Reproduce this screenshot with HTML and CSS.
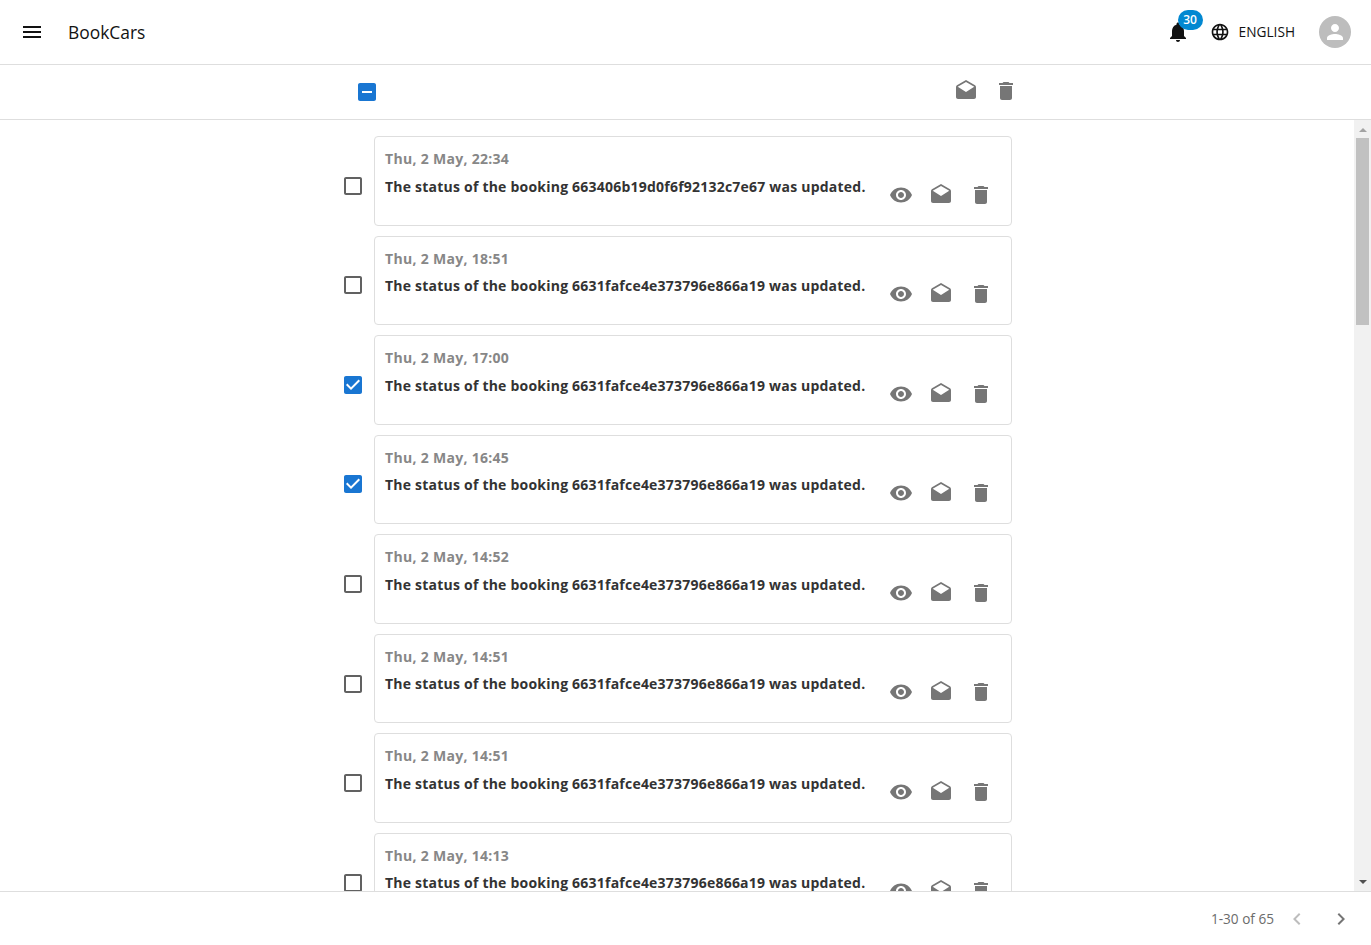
FILE: index.html
```html
<!DOCTYPE html>
<html lang="en">
  <head>
    <meta charset="UTF-8" />
    <meta name="viewport" content="width=device-width, initial-scale=1.0" />
    <title>BookCars</title>
    <link rel="stylesheet" href="styles.css">
  </head>
  <body>
    <svg class="sprite" xmlns="http://www.w3.org/2000/svg">
      <symbol id="i-menu" viewBox="0 0 24 24"><path d="M3 18h18v-2H3v2zm0-5h18v-2H3v2zm0-7v2h18V6H3z"/></symbol>
      <symbol id="i-bell" viewBox="0 0 24 24"><path d="M12 22c1.1 0 2-.9 2-2h-4c0 1.1.89 2 2 2zm6-6v-5c0-3.07-1.64-5.64-4.5-6.32V4c0-.83-.67-1.5-1.5-1.5s-1.5.67-1.5 1.5v.68C7.63 5.36 6 7.92 6 11v5l-2 2v1h16v-1l-2-2z"/></symbol>
      <symbol id="i-globe" viewBox="0 0 24 24"><path d="M11.99 2C6.47 2 2 6.48 2 12s4.47 10 9.99 10C17.52 22 22 17.52 22 12S17.52 2 11.99 2zm6.93 6h-2.95c-.32-1.25-.78-2.45-1.38-3.56 1.84.63 3.37 1.91 4.33 3.56zM12 4.04c.83 1.2 1.48 2.53 1.91 3.96h-3.82c.43-1.43 1.08-2.76 1.91-3.96zM4.26 14C4.1 13.36 4 12.69 4 12s.1-1.36.26-2h3.38c-.08.66-.14 1.32-.14 2 0 .68.06 1.34.14 2H4.26zm.82 2h2.95c.32 1.25.78 2.45 1.38 3.56-1.84-.63-3.37-1.9-4.33-3.56zm2.95-8H5.08c.96-1.66 2.49-2.93 4.33-3.56C8.81 5.55 8.35 6.75 8.03 8zM12 19.96c-.83-1.2-1.48-2.53-1.91-3.96h3.82c-.43 1.43-1.08 2.76-1.91 3.96zM14.34 14H9.66c-.09-.66-.16-1.32-.16-2 0-.68.07-1.35.16-2h4.68c.09.65.16 1.32.16 2 0 .68-.07 1.34-.16 2zm.25 5.56c.6-1.11 1.06-2.31 1.38-3.56h2.95c-.96 1.65-2.49 2.93-4.33 3.56zM16.36 14c.08-.66.14-1.32.14-2 0-.68-.06-1.34-.14-2h3.38c.16.64.26 1.31.26 2s-.1 1.36-.26 2h-3.38z"/></symbol>
      <symbol id="i-person" viewBox="0 0 24 24"><path d="M12 12c2.21 0 4-1.79 4-4s-1.79-4-4-4-4 1.79-4 4 1.79 4 4 4zm0 2c-2.67 0-8 1.34-8 4v2h16v-2c0-2.66-5.33-4-8-4z"/></symbol>
      <symbol id="i-eye" viewBox="0 0 24 24"><path d="M12 4.5C7 4.5 2.73 7.61 1 12c1.73 4.39 6 7.5 11 7.5s9.27-3.11 11-7.5c-1.73-4.39-6-7.5-11-7.5zM12 17c-2.76 0-5-2.24-5-5s2.24-5 5-5 5 2.24 5 5-2.24 5-5 5zm0-8c-1.66 0-3 1.34-3 3s1.34 3 3 3 3-1.34 3-3-1.34-3-3-3z"/></symbol>
      <symbol id="i-drafts" viewBox="0 0 24 24"><path d="M21.99 8c0-.72-.37-1.35-.94-1.7L12 1 2.95 6.3C2.38 6.65 2 7.28 2 8v10c0 1.1.9 2 2 2h16c1.1 0 2-.9 2-2l-.01-10zM12 13 3.74 7.84 12 3l8.26 4.84L12 13z"/></symbol>
      <symbol id="i-trash" viewBox="0 0 24 24"><path d="M6 19c0 1.1.9 2 2 2h8c1.1 0 2-.9 2-2V7H6v12zM19 4h-3.5l-1-1h-5l-1 1H5v2h14V4z"/></symbol>
      <symbol id="i-box" viewBox="0 0 24 24"><path d="M19 5v14H5V5h14m0-2H5c-1.1 0-2 .9-2 2v14c0 1.1.9 2 2 2h14c1.1 0 2-.9 2-2V5c0-1.1-.9-2-2-2z"/></symbol>
      <symbol id="i-checked" viewBox="0 0 24 24"><path d="M19 3H5c-1.11 0-2 .9-2 2v14c0 1.1.89 2 2 2h14c1.11 0 2-.9 2-2V5c0-1.1-.89-2-2-2zm-9 14l-5-5 1.41-1.41L10 14.17l7.59-7.59L19 8l-9 9z"/></symbol>
      <symbol id="i-partial" viewBox="0 0 24 24"><path d="M19 3H5c-1.1 0-2 .9-2 2v14c0 1.1.9 2 2 2h14c1.1 0 2-.9 2-2V5c0-1.1-.9-2-2-2zm-2 10H7v-2h10v2z"/></symbol>
      <symbol id="i-prev" viewBox="0 0 24 24"><path d="M15.41 7.41 14 6l-6 6 6 6 1.41-1.41L10.83 12z"/></symbol>
      <symbol id="i-next" viewBox="0 0 24 24"><path d="M10 6 8.59 7.41 13.17 12l-4.58 4.59L10 18l6-6z"/></symbol>
    </svg>

    <header class="topbar">
      <svg class="icon menu-icon"><use href="#i-menu"/></svg>
      <div class="brand">BookCars</div>
      <div class="topbar-right">
        <div class="bell">
          <svg class="icon"><use href="#i-bell"/></svg>
          <span class="badge">30</span>
        </div>
        <svg class="icon globe"><use href="#i-globe"/></svg>
        <span class="lang">ENGLISH</span>
        <div class="avatar"><svg class="icon person"><use href="#i-person"/></svg></div>
      </div>
    </header>

    <div class="toolbar">
      <svg class="icon check-on"><use href="#i-partial"/></svg>
      <div class="toolbar-actions">
        <span class="btn"><svg class="icon"><use href="#i-drafts"/></svg></span>
        <span class="btn"><svg class="icon"><use href="#i-trash"/></svg></span>
      </div>
    </div>

    <main class="content">
      <div class="list">
        <div class="row">
          <svg class="icon check"><use href="#i-box"/></svg>
          <div class="card">
            <div class="card-text">
              <div class="date">Thu, 2 May, 22:34</div>
              <div class="message">The status of the booking 663406b19d0f6f92132c7e67 was updated.</div>
            </div>
            <div class="actions">
              <span class="btn"><svg class="icon"><use href="#i-eye"/></svg></span>
              <span class="btn"><svg class="icon"><use href="#i-drafts"/></svg></span>
              <span class="btn"><svg class="icon"><use href="#i-trash"/></svg></span>
            </div>
          </div>
        </div>
        <div class="row">
          <svg class="icon check"><use href="#i-box"/></svg>
          <div class="card">
            <div class="card-text">
              <div class="date">Thu, 2 May, 18:51</div>
              <div class="message">The status of the booking 6631fafce4e373796e866a19 was updated.</div>
            </div>
            <div class="actions">
              <span class="btn"><svg class="icon"><use href="#i-eye"/></svg></span>
              <span class="btn"><svg class="icon"><use href="#i-drafts"/></svg></span>
              <span class="btn"><svg class="icon"><use href="#i-trash"/></svg></span>
            </div>
          </div>
        </div>
        <div class="row">
          <svg class="icon check-on"><use href="#i-checked"/></svg>
          <div class="card">
            <div class="card-text">
              <div class="date">Thu, 2 May, 17:00</div>
              <div class="message">The status of the booking 6631fafce4e373796e866a19 was updated.</div>
            </div>
            <div class="actions">
              <span class="btn"><svg class="icon"><use href="#i-eye"/></svg></span>
              <span class="btn"><svg class="icon"><use href="#i-drafts"/></svg></span>
              <span class="btn"><svg class="icon"><use href="#i-trash"/></svg></span>
            </div>
          </div>
        </div>
        <div class="row">
          <svg class="icon check-on"><use href="#i-checked"/></svg>
          <div class="card">
            <div class="card-text">
              <div class="date">Thu, 2 May, 16:45</div>
              <div class="message">The status of the booking 6631fafce4e373796e866a19 was updated.</div>
            </div>
            <div class="actions">
              <span class="btn"><svg class="icon"><use href="#i-eye"/></svg></span>
              <span class="btn"><svg class="icon"><use href="#i-drafts"/></svg></span>
              <span class="btn"><svg class="icon"><use href="#i-trash"/></svg></span>
            </div>
          </div>
        </div>
        <div class="row">
          <svg class="icon check"><use href="#i-box"/></svg>
          <div class="card">
            <div class="card-text">
              <div class="date">Thu, 2 May, 14:52</div>
              <div class="message">The status of the booking 6631fafce4e373796e866a19 was updated.</div>
            </div>
            <div class="actions">
              <span class="btn"><svg class="icon"><use href="#i-eye"/></svg></span>
              <span class="btn"><svg class="icon"><use href="#i-drafts"/></svg></span>
              <span class="btn"><svg class="icon"><use href="#i-trash"/></svg></span>
            </div>
          </div>
        </div>
        <div class="row">
          <svg class="icon check"><use href="#i-box"/></svg>
          <div class="card">
            <div class="card-text">
              <div class="date">Thu, 2 May, 14:51</div>
              <div class="message">The status of the booking 6631fafce4e373796e866a19 was updated.</div>
            </div>
            <div class="actions">
              <span class="btn"><svg class="icon"><use href="#i-eye"/></svg></span>
              <span class="btn"><svg class="icon"><use href="#i-drafts"/></svg></span>
              <span class="btn"><svg class="icon"><use href="#i-trash"/></svg></span>
            </div>
          </div>
        </div>
        <div class="row">
          <svg class="icon check"><use href="#i-box"/></svg>
          <div class="card">
            <div class="card-text">
              <div class="date">Thu, 2 May, 14:51</div>
              <div class="message">The status of the booking 6631fafce4e373796e866a19 was updated.</div>
            </div>
            <div class="actions">
              <span class="btn"><svg class="icon"><use href="#i-eye"/></svg></span>
              <span class="btn"><svg class="icon"><use href="#i-drafts"/></svg></span>
              <span class="btn"><svg class="icon"><use href="#i-trash"/></svg></span>
            </div>
          </div>
        </div>
        <div class="row">
          <svg class="icon check"><use href="#i-box"/></svg>
          <div class="card">
            <div class="card-text">
              <div class="date">Thu, 2 May, 14:13</div>
              <div class="message">The status of the booking 6631fafce4e373796e866a19 was updated.</div>
            </div>
            <div class="actions">
              <span class="btn"><svg class="icon"><use href="#i-eye"/></svg></span>
              <span class="btn"><svg class="icon"><use href="#i-drafts"/></svg></span>
              <span class="btn"><svg class="icon"><use href="#i-trash"/></svg></span>
            </div>
          </div>
        </div>
      </div>
      <div class="scrollbar">
        <span class="arrow-up"></span>
        <div class="thumb"></div>
        <span class="arrow-down"></span>
      </div>
    </main>

    <footer class="pager">
      <span class="pager-text">1-30 of 65</span>
      <svg class="icon prev"><use href="#i-prev"/></svg>
      <svg class="icon next"><use href="#i-next"/></svg>
    </footer>
  </body>
</html>
```

FILE: styles.css
```css
* {
  box-sizing: border-box;
}
body {
  margin: 0;
  height: 100vh;
  display: flex;
  flex-direction: column;
  overflow: hidden;
  background-color: #fff;
  font-family: "Open Sans", "Noto Sans", Arial, sans-serif;
  color: #333;
}
.sprite {
  display: none;
}
.icon {
  display: block;
  width: 24px;
  height: 24px;
  flex: none;
  fill: currentColor;
}

/* top bar */
.topbar {
  height: 65px;
  flex: none;
  display: flex;
  align-items: center;
  padding: 0 20px;
  border-bottom: 1px solid #dedede;
  color: #121212;
}
.brand {
  margin-left: 24px;
  font-size: 17.4px;
}
.topbar-right {
  margin-left: auto;
  display: flex;
  align-items: center;
}
.bell {
  position: relative;
  width: 24px;
  height: 24px;
}
.badge {
  position: absolute;
  left: 12px;
  top: -10px;
  width: 25px;
  height: 20px;
  border-radius: 10px;
  background-color: #0288d1;
  color: white;
  font-size: 12px;
  font-weight: 600;
  line-height: 20px;
  text-align: center;
}
.globe {
  width: 20px;
  height: 20px;
  margin-left: 20px;
}
.lang {
  margin-left: 9px;
  margin-bottom: 2px;
  font-size: 13.7px;
}
.avatar {
  width: 32px;
  height: 32px;
  margin-left: 24px;
  border-radius: 50%;
  background-color: #bdbdbd;
  color: white;
  display: flex;
  align-items: center;
  justify-content: center;
}
.person {
  width: 24px;
  height: 24px;
}

/* toolbar above the list */
.toolbar {
  height: 55px;
  flex: none;
  display: flex;
  align-items: center;
  padding-left: 355px;
  border-bottom: 1px solid #dedede;
}
.toolbar-actions {
  margin-left: 567px;
  margin-top: -3px;
  display: flex;
}
.btn {
  width: 40px;
  height: 40px;
  display: flex;
  align-items: center;
  justify-content: center;
  color: #767676;
}
.check {
  color: #616161;
}
.check-on {
  color: #1976d2;
}

/* notifications */
.content {
  flex: 1;
  min-height: 0;
  display: flex;
}
.list {
  flex: 1;
  min-width: 0;
  overflow: hidden;
  padding: 16px 0 0 341px;
}
.row {
  width: 671px;
  height: 89.56px;
  margin-bottom: 10px;
  display: flex;
  align-items: center;
}
.row > .icon {
  margin-right: 9px;
  margin-top: 10px;
}
.card {
  flex: 1;
  height: 100%;
  display: flex;
  padding: 0 10px;
  border: 1px solid #dedede;
  border-radius: 4px;
}
.card-text {
  flex: 1;
  min-width: 0;
  padding-top: 12px;
}
.date {
  font-size: 14px;
  font-weight: 700;
  line-height: 19px;
  letter-spacing: 0.3px;
  color: #878787;
}
.message {
  margin-top: 8.6px;
  font-size: 14px;
  font-weight: 700;
  line-height: 19px;
  letter-spacing: 0.22px;
  white-space: nowrap;
}
.actions {
  display: flex;
  padding-top: 37.6px;
}

/* scrollbar */
.scrollbar {
  width: 17px;
  flex: none;
  background-color: #f1f1f1;
  display: flex;
  flex-direction: column;
  align-items: center;
  padding-top: 8px;
}
.arrow-up {
  border: 4px solid transparent;
  border-top: 0;
  border-bottom: 4px solid #a3a3a3;
}
.arrow-down {
  margin-top: auto;
  margin-bottom: 7px;
  border: 4px solid transparent;
  border-bottom: 0;
  border-top: 4px solid #505050;
}
.thumb {
  width: 13px;
  height: 187px;
  margin-top: 6px;
  background-color: #c1c1c1;
}

/* pagination */
.pager {
  height: 54px;
  flex: none;
  display: flex;
  align-items: center;
  justify-content: flex-end;
  padding-right: 18px;
  border-top: 1px solid #dedede;
  color: #6b6b6b;
}
.pager-text {
  font-size: 13.6px;
}
.prev {
  margin-left: 11px;
  color: #bdbdbd;
}
.next {
  margin-left: 20px;
  color: #757575;
}
```
